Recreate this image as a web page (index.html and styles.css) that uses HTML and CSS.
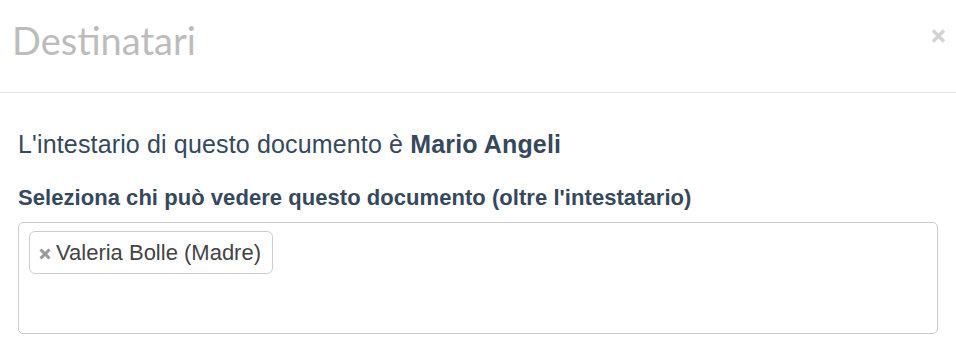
FILE: index.html
```html
<!DOCTYPE html>
<html lang="it">
<head>
<meta charset="utf-8">
<title>Destinatari</title>
<link rel="stylesheet" href="styles.css">
</head>
<body>
<div class="modal">
  <div class="modal-header">
    <h4 class="modal-title">Destinatari</h4>
    <button class="close" type="button" aria-label="Chiudi">
      <svg width="15" height="14" viewBox="0 0 15 14"><path d="M2 1.5 L13 12.5 M13 1.5 L2 12.5" stroke="#d2d2d2" stroke-width="3.4" stroke-linecap="butt"/></svg>
    </button>
  </div>
  <div class="modal-body">
    <p class="owner">L'intestario di questo documento è <strong>Mario Angeli</strong></p>
    <label class="field-label">Seleziona chi può vedere questo documento (oltre l'intestatario)</label>
    <div class="select-box">
      <span class="tag"><svg class="tag-remove" width="12" height="12" viewBox="0 0 12 12"><path d="M1.5 1.5 L10.5 10.5 M10.5 1.5 L1.5 10.5" stroke="#999999" stroke-width="3"/></svg>Valeria Bolle (Madre)</span>
    </div>
  </div>
</div>
</body>
</html>
```
FILE: styles.css
```css
html, body {
  margin: 0;
  padding: 0;
  background: #ffffff;
}
.modal {
  width: 956px;
  font-family: "Liberation Sans", Arial, sans-serif;
  color: #34495e;
}
.modal-header {
  box-sizing: border-box;
  height: 93px;
  padding: 17px 10px 0 12px;
  display: flex;
  justify-content: space-between;
  align-items: flex-start;
  border-bottom: 1px solid #e5e5e5;
}
.modal-title {
  margin: 0;
  font-family: Lato, "Liberation Sans", sans-serif;
  font-weight: 400;
  font-size: 38px;
  line-height: 46px;
  color: #bcbcbc;
}
.close {
  margin: 12px 0 0 0;
  padding: 0;
  border: 0;
  background: transparent;
  width: 15px;
  height: 14px;
  display: flex;
}
.modal-body {
  padding: 36px 18px 0 18px;
}
.owner {
  margin: 0 0 26px 0;
  font-size: 25px;
  line-height: 30px;
  letter-spacing: 0.15px;
}
.owner strong {
  font-weight: 700;
}
.field-label {
  display: block;
  font-size: 22px;
  font-weight: 700;
  line-height: 26px;
  letter-spacing: 0.05px;
  margin-bottom: 11px;
}
.select-box {
  box-sizing: border-box;
  height: 112px;
  border: 1px solid #cccccc;
  border-radius: 5px;
  padding: 8px 10px;
  display: flex;
  align-items: flex-start;
}
.tag {
  box-sizing: border-box;
  height: 43px;
  display: inline-flex;
  align-items: center;
  padding: 0 11px 0 9px;
  border: 1px solid #cccccc;
  border-radius: 6px;
  font-size: 22px;
  color: #444444;
}
.tag-remove {
  margin: 2px 5px 0 0;
  flex: none;
}
```
